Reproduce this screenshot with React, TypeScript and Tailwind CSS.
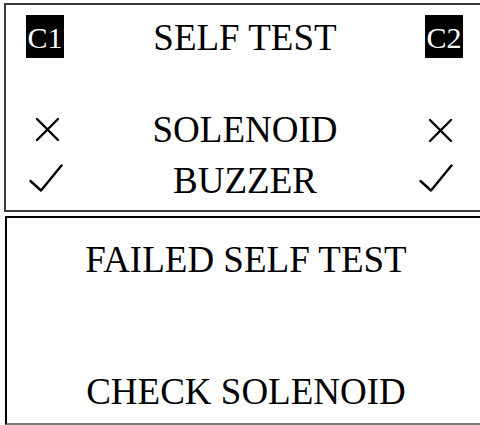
import React from "react";

const Cross = () => (
  <svg width="25" height="25" viewBox="0 0 25 25" className="block">
    <path d="M2 2 L23 23 M23 2 L2 23" stroke="#000" strokeWidth="2.4" strokeLinecap="round" fill="none" />
  </svg>
);

const Check = () => (
  <svg width="34" height="28" viewBox="0 0 34 28" className="block">
    <path d="M1.5 17 L12 26.5 L32.5 1.5" stroke="#000" strokeWidth="2.4" strokeLinecap="round" strokeLinejoin="round" fill="none" />
  </svg>
);

const Badge = ({ label }: { label: string }) => (
  <div className="-mt-[1px] h-[43px] w-[38px] bg-black text-white text-[30px] leading-[45px] text-center">
    {label}
  </div>
);

export default function App() {
  return (
    <div className="relative w-[480px] h-[425px] overflow-hidden bg-white text-black font-['Liberation_Serif']">
      {/* Self test panel */}
      <div className="ml-[4px] mt-[3px] w-[482px] shrink-0 h-[209px] border-2 border-[#3c3c3c] pt-[11px]">
        <div className="flex items-start h-[43px]">
          <div className="w-[80px] flex justify-center pr-[2px]">
            <Badge label="C1" />
          </div>
          <div className="flex-1 text-center text-[37px] leading-[43px]">SELF TEST</div>
          <div className="w-[80px] flex justify-center">
            <Badge label="C2" />
          </div>
        </div>

        <div className="flex items-start h-[43px] mt-[49px]">
          <div className="w-[80px] flex justify-center pt-[9px] pl-[3px]">
            <Cross />
          </div>
          <div className="flex-1 text-center text-[37px] leading-[43px]">SOLENOID</div>
          <div className="w-[80px] flex justify-center pt-[10px] pr-[8px]">
            <Cross />
          </div>
        </div>

        <div className="flex items-start h-[43px] mt-[8px]">
          <div className="w-[80px] flex justify-center pt-[5px]">
            <Check />
          </div>
          <div className="flex-1 text-center text-[37px] leading-[43px]">BUZZER</div>
          <div className="w-[80px] flex justify-center pt-[5px] pr-[17px]">
            <Check />
          </div>
        </div>
      </div>

      {/* Result panel */}
      <div className="ml-[5px] mt-[4px] w-[482px] shrink-0 h-[209px] border-2 border-black border-b-[#7a7a7a] pt-[20px]">
        <div className="text-center text-[37px] leading-[43px]">FAILED SELF TEST</div>
        <div className="text-center text-[37px] leading-[43px] mt-[89px]">CHECK SOLENOID</div>
      </div>
    </div>
  );
}
